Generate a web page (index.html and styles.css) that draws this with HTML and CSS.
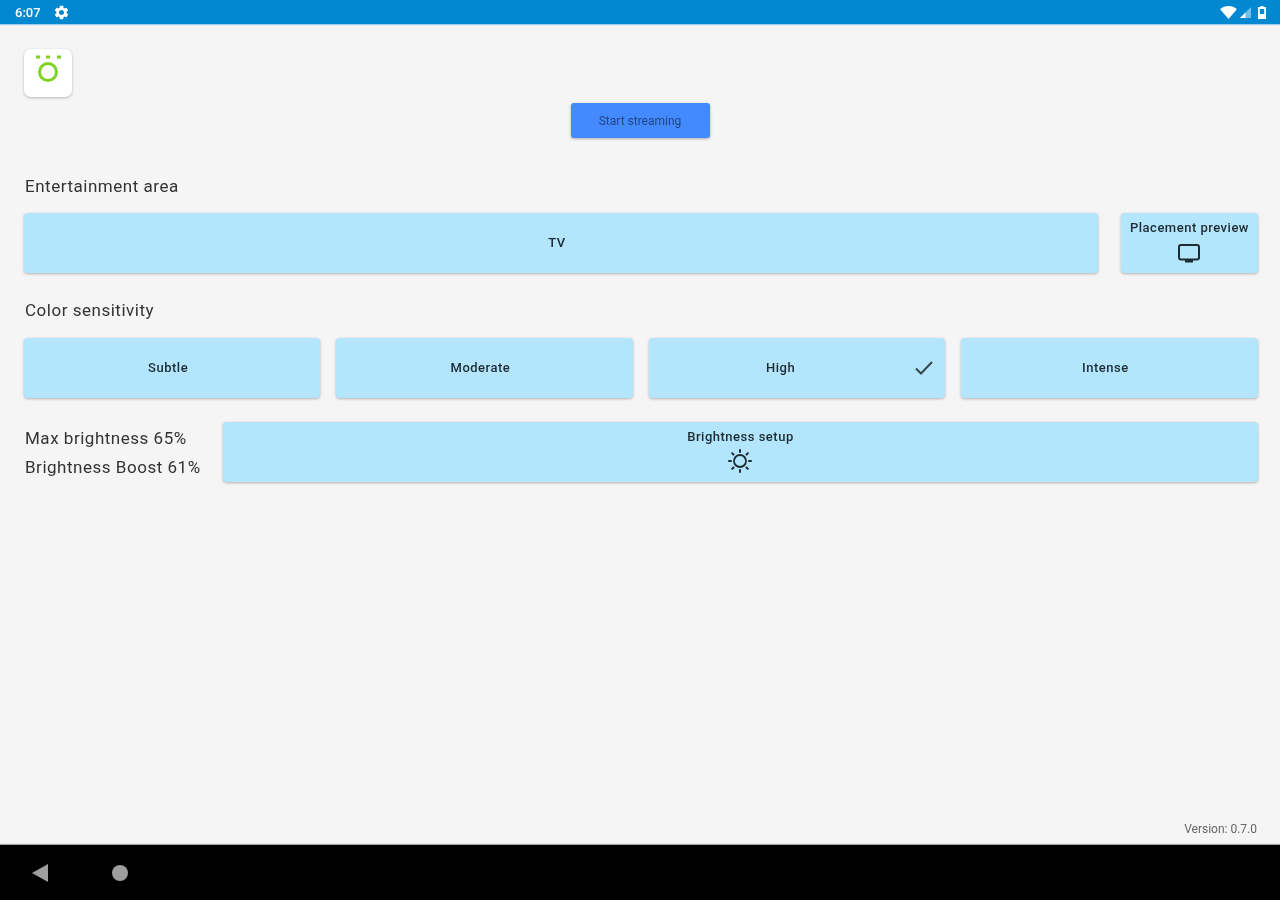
FILE: index.html
```html
<!DOCTYPE html>
<html lang="en">
<head>
<meta charset="utf-8">
<title>Hue Sync</title>
<link rel="stylesheet" href="styles.css">
</head>
<body>
<div class="screen">
  <header class="status">
    <div class="status-left">
      <span class="time">6:07</span>
      <svg class="gear" viewBox="0 0 24 24"><path fill="#fff" d="M19.14 12.94c.04-.3.06-.61.06-.94 0-.32-.02-.64-.07-.94l2.03-1.58c.18-.14.23-.41.12-.61l-1.92-3.32c-.12-.22-.37-.29-.59-.22l-2.39.96c-.5-.38-1.03-.7-1.62-.94l-.36-2.54c-.04-.24-.24-.41-.48-.41h-3.84c-.24 0-.43.17-.47.41l-.36 2.54c-.59.24-1.13.57-1.62.94l-2.39-.96c-.22-.08-.47 0-.59.22L2.74 8.87c-.12.21-.08.47.12.61l2.03 1.58c-.05.3-.09.63-.09.94s.02.64.07.94l-2.03 1.58c-.18.14-.23.41-.12.61l1.92 3.32c.12.22.37.29.59.22l2.39-.96c.5.38 1.03.7 1.62.94l.36 2.54c.05.24.24.41.48.41h3.84c.24 0 .44-.17.47-.41l.36-2.54c.59-.24 1.13-.56 1.62-.94l2.39.96c.22.08.47 0 .59-.22l1.92-3.32c.12-.22.07-.47-.12-.61l-2.01-1.58zM12 15.6c-1.98 0-3.6-1.62-3.6-3.6s1.62-3.6 3.6-3.6 3.6 1.62 3.6 3.6-1.62 3.6-3.6 3.6z"/></svg>
    </div>
    <div class="status-right">
      <svg class="wifi" viewBox="0 0 18 14"><path fill="#fff" d="M0 3.500C5 -1 13 -1 18 3.500L9 14Z"/></svg>
      <svg class="signal" viewBox="0 0 12 12"><path fill="#fff" opacity=".45" d="M12 0V12H0Z"/><path fill="#fff" d="M6 6V12H0Z"/></svg>
      <svg class="battery" viewBox="0 0 8 13"><path fill="#fff" fill-rule="evenodd" d="M2.500 0H5.500V1H8V13H0V1H2.500ZM1.800 3V8H6.200V3Z"/></svg>
    </div>
  </header>
  <main class="content">
    <div class="logo">
      <svg class="logo-mark" viewBox="0 0 48 48">
        <rect x="12" y="6.500" width="4" height="3" fill="#7ed321"/>
        <rect x="22" y="6.500" width="4" height="3" fill="#7ed321"/>
        <rect x="33" y="6.500" width="4" height="3" fill="#7ed321"/>
        <circle cx="24" cy="23" r="8.500" fill="none" stroke="#7ed321" stroke-width="3"/>
      </svg>
    </div>
    <div class="start-row"><button class="start"><span class="cap">Start streaming</span></button></div>
    <h2 class="label first">Entertainment area</h2>
    <div class="row area-row">
      <button class="tile grow shifted"><span class="cap">TV</span></button>
      <button class="tile preview">
        <span class="cap">Placement preview</span>
        <svg class="tv-icon" viewBox="0 0 24 22"><rect x="2" y="2" width="20" height="14.500" rx="2" fill="none" stroke="#1d2b33" stroke-width="2"/><rect x="8" y="17" width="8" height="2.500" fill="#1d2b33"/></svg>
      </button>
    </div>
    <h2 class="label second">Color sensitivity</h2>
    <div class="row sensitivity">
      <button class="tile shifted"><span class="cap">Subtle</span></button>
      <button class="tile shifted"><span class="cap">Moderate</span></button>
      <button class="tile high"><span class="cap">High</span>
        <svg class="check" viewBox="0 0 20 16"><path d="M2 8.500 7 13.500 18 2" fill="none" stroke="#37474f" stroke-width="2"/></svg>
      </button>
      <button class="tile shifted"><span class="cap">Intense</span></button>
    </div>
    <div class="row brightness">
      <div class="stats">
        <p>Max brightness 65%</p>
        <p>Brightness Boost 61%</p>
      </div>
      <button class="tile grow setup">
        <span class="cap">Brightness setup</span>
        <svg class="sun" viewBox="0 0 24 24"><circle cx="12" cy="12" r="6" fill="none" stroke="#1d2b33" stroke-width="1.800"/><path d="M12 1V3M12 21V23M1 12H3M21 12H23M4.200 4.200 5.500 5.500M18.500 18.500 19.800 19.800M4.200 19.800 5.500 18.500M18.500 5.500 19.800 4.200" stroke="#1d2b33" stroke-width="2" stroke-linecap="round" fill="none"/></svg>
      </button>
    </div>
    <div class="version">Version: 0.7.0</div>
  </main>
  <footer class="nav">
    <svg class="back" viewBox="0 0 16 18"><path fill="#9e9e9e" d="M0 9 16 0V18Z"/></svg>
    <span class="home"></span>
  </footer>
</div>
</body>
</html>
```
FILE: styles.css
```css
* { box-sizing: border-box; }
html, body { margin: 0; padding: 0; }
body { font-family: Roboto, "Liberation Sans", sans-serif; background: #f5f5f5; }
.screen { width: 1280px; height: 900px; display: flex; flex-direction: column; overflow: hidden; }

.status { height: 24px; flex: none; background: #0288d1; display: flex; justify-content: space-between; align-items: center; padding: 0 14px 0 15px; color: #fff; box-shadow: 0 1px 1px rgba(2,136,209,.35); }
.status-left, .status-right { display: flex; align-items: center; }
.time { font-size: 13px; font-weight: 500; width: 38px; filter: blur(.6px); }
.gear { width: 17px; height: 17px; filter: blur(.5px); }
.wifi { width: 17px; height: 13px; filter: blur(.5px); }
.signal { width: 11px; height: 11px; margin-left: 3px; filter: blur(.5px); }
.battery { width: 8px; height: 13px; margin-left: 7px; filter: blur(.5px); }

.content { flex: 1; display: flex; flex-direction: column; padding: 25px 22px 0 24px; min-height: 0; }
.logo { width: 48px; height: 48px; background: #fff; border-radius: 7px; box-shadow: 0 1px 3px rgba(0,0,0,.25); flex: none; }
.logo-mark { display: block; width: 48px; height: 48px; filter: blur(.6px); }
.start-row { display: flex; justify-content: center; margin-top: 6px; padding-right: 2px; }
.start { width: 139px; height: 35px; border: 0; border-radius: 3px; background: #448aff; color: #22467f; font: 12px Roboto, sans-serif; padding: 0; box-shadow: 0 1px 3px rgba(0,0,0,.3); }
.cap { display: block; filter: blur(.6px); }

.label { margin: 0; font-size: 17px; font-weight: 400; color: #333; height: 20px; line-height: 20px; letter-spacing: .52px; padding-left: 1px; filter: blur(.6px); }
.label.first { margin-top: 38px; }
.label.second { margin-top: 27px; }

.row { display: flex; gap: 23px; height: 60px; flex: none; }
.area-row { margin-top: 17px; }
.sensitivity { margin-top: 18px; gap: 16px; }
.sensitivity .tile { flex: none; width: calc((100% - 48px) / 4 - .25px); }
.sensitivity .tile:last-child { flex: 1; }
.brightness { margin-top: 24px; gap: 22px; }

.tile { border: 0; border-radius: 4px; background: #b3e5fc; color: #1d2b33; font: 500 13px Roboto, sans-serif; letter-spacing: .5px; padding: 0; box-shadow: 0 1px 3px rgba(0,0,0,.28); display: flex; flex-direction: column; align-items: center; justify-content: center; position: relative; }
.grow { flex: 1; }
.shifted { padding: 0 8px 1px 0; }
.preview { width: 137px; justify-content: flex-start; padding-top: 7px; }
.tv-icon { width: 24px; height: 22px; margin: 8px 2px 0 0; filter: blur(.4px); }
.high { padding: 0 32px 1px 0; }
.check { position: absolute; right: 11px; top: 22px; width: 20px; height: 16px; filter: blur(.4px); }
.setup { justify-content: flex-start; padding-top: 7px; }
.sun { width: 24px; height: 24px; margin: 5px 2px 0 0; filter: blur(.5px); }

.stats { width: 177px; padding: 5px 0 0 1px; font-size: 17px; color: #333; letter-spacing: .52px; filter: blur(.6px); }
.stats p { margin: 0; height: 29px; line-height: 23px; white-space: nowrap; }

.version { margin-top: auto; margin-bottom: 9px; margin-right: 1px; align-self: flex-end; font-size: 12px; color: #666; filter: blur(.6px); }

.nav { height: 55px; flex: none; background: #000; box-shadow: 0 -1px 1px #a8a8a8; display: flex; align-items: center; padding-left: 32px; }
.back { width: 16px; height: 18px; filter: blur(.6px); }
.home { width: 16px; height: 16px; border-radius: 50%; background: #9e9e9e; margin-left: 64px; filter: blur(.5px); }
```
